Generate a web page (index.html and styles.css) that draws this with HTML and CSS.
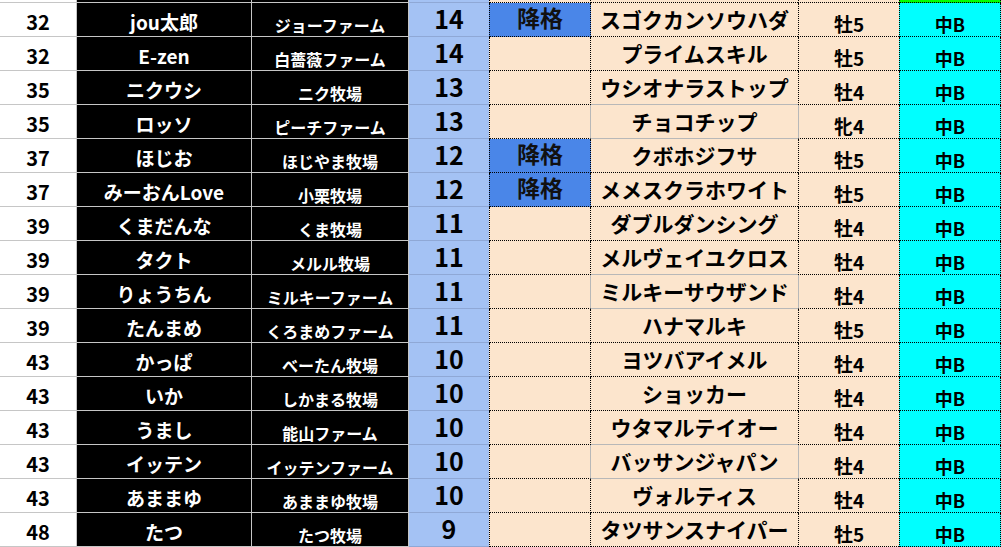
FILE: index.html
```html
<!DOCTYPE html>
<html lang="ja">
<head>
<meta charset="utf-8">
<link rel="stylesheet" href="styles.css">
</head>
<body>
<div class="sheet">
  <div class="c rank strip"></div><div class="c name strip"></div><div class="c farm strip"></div><div class="c num strip"></div><div class="c dem strip"></div><div class="c horse strip"></div><div class="c sex strip"></div><div class="c grade strip green"></div>

  <div class="c rank">32</div><div class="c name">jou太郎</div><div class="c farm">ジョーファーム</div><div class="c num">14</div><div class="c dem down">降格</div><div class="c horse">スゴクカンソウハダ</div><div class="c sex">牡5</div><div class="c grade">中B</div>
  <div class="c rank">32</div><div class="c name">E-zen</div><div class="c farm">白薔薇ファーム</div><div class="c num">14</div><div class="c dem"></div><div class="c horse">プライムスキル</div><div class="c sex">牡5</div><div class="c grade">中B</div>
  <div class="c rank">35</div><div class="c name">ニクウシ</div><div class="c farm">ニク牧場</div><div class="c num">13</div><div class="c dem"></div><div class="c horse above-box">ウシオナラストップ</div><div class="c sex">牡4</div><div class="c grade">中B</div>
  <div class="c rank">35</div><div class="c name">ロッソ</div><div class="c farm">ピーチファーム</div><div class="c num">13</div><div class="c dem left-box"></div><div class="c horse box">チョコチップ</div><div class="c sex">牝4</div><div class="c grade">中B</div>
  <div class="c rank">37</div><div class="c name">ほじお</div><div class="c farm">ほじやま牧場</div><div class="c num">12</div><div class="c dem down">降格</div><div class="c horse">クボホジフサ</div><div class="c sex">牡5</div><div class="c grade">中B</div>
  <div class="c rank">37</div><div class="c name">みーおんLove</div><div class="c farm">小栗牧場</div><div class="c num">12</div><div class="c dem down">降格</div><div class="c horse">メメスクラホワイト</div><div class="c sex">牡5</div><div class="c grade">中B</div>
  <div class="c rank">39</div><div class="c name">くまだんな</div><div class="c farm">くま牧場</div><div class="c num">11</div><div class="c dem"></div><div class="c horse">ダブルダンシング</div><div class="c sex">牡4</div><div class="c grade">中B</div>
  <div class="c rank">39</div><div class="c name">タクト</div><div class="c farm">メルル牧場</div><div class="c num">11</div><div class="c dem"></div><div class="c horse above-box">メルヴェイユクロス</div><div class="c sex">牡4</div><div class="c grade">中B</div>
  <div class="c rank">39</div><div class="c name">りょうちん</div><div class="c farm">ミルキーファーム</div><div class="c num">11</div><div class="c dem left-box"></div><div class="c horse box">ミルキーサウザンド</div><div class="c sex">牡4</div><div class="c grade">中B</div>
  <div class="c rank">39</div><div class="c name">たんまめ</div><div class="c farm">くろまめファーム</div><div class="c num">11</div><div class="c dem"></div><div class="c horse">ハナマルキ</div><div class="c sex">牡5</div><div class="c grade">中B</div>
  <div class="c rank">43</div><div class="c name">かっぱ</div><div class="c farm">べーたん牧場</div><div class="c num">10</div><div class="c dem"></div><div class="c horse">ヨツバアイメル</div><div class="c sex">牡4</div><div class="c grade">中B</div>
  <div class="c rank">43</div><div class="c name">いか</div><div class="c farm">しかまる牧場</div><div class="c num">10</div><div class="c dem"></div><div class="c horse">ショッカー</div><div class="c sex">牡4</div><div class="c grade">中B</div>
  <div class="c rank">43</div><div class="c name">うまし</div><div class="c farm">能山ファーム</div><div class="c num">10</div><div class="c dem"></div><div class="c horse above-box">ウタマルテイオー</div><div class="c sex">牡4</div><div class="c grade">中B</div>
  <div class="c rank">43</div><div class="c name">イッテン</div><div class="c farm">イッテンファーム</div><div class="c num">10</div><div class="c dem left-box"></div><div class="c horse box">バッサンジャパン</div><div class="c sex">牡4</div><div class="c grade">中B</div>
  <div class="c rank">43</div><div class="c name">あままゆ</div><div class="c farm">あままゆ牧場</div><div class="c num">10</div><div class="c dem"></div><div class="c horse">ヴォルティス</div><div class="c sex">牡4</div><div class="c grade">中B</div>
  <div class="c rank">48</div><div class="c name">たつ</div><div class="c farm">たつ牧場</div><div class="c num">9</div><div class="c dem"></div><div class="c horse">タツサンスナイパー</div><div class="c sex">牡5</div><div class="c grade">中B</div>
</div>
</body>
</html>
```

FILE: styles.css
```css
html, body {
  margin: 0;
  padding: 0;
  background: #ffffff;
  overflow: hidden;
}

.sheet {
  display: grid;
  grid-template-columns: 77px 175px 157px 80px 102px 207px 101px 102px;
  grid-template-rows: 3px repeat(16, 34px);
  width: 1001px;
  font-family: "Noto Sans CJK JP", "Noto Sans", sans-serif;
  font-weight: 700;
  color: #000;
}

.c {
  box-sizing: border-box;
  display: flex;
  align-items: flex-end;
  justify-content: center;
  line-height: 1;
  white-space: nowrap;
}

.strip { padding: 0 !important; }

.rank {
  background: #ffffff;
  border-right: 1px solid #c6c6c6;
  border-bottom: 1px solid #c6c6c6;
  font-size: 20px;
  padding-bottom: 4px;
}

.name {
  background: #000;
  color: #fff;
  border-right: 1px solid #c6c6c6;
  border-bottom: 1px solid #c6c6c6;
  font-size: 19px;
  padding-bottom: 5px;
}

.farm {
  background: #000;
  color: #fff;
  border-right: 1px solid #c6c6c6;
  border-bottom: 1px solid #c6c6c6;
  font-size: 16px;
  padding-bottom: 3px;
}

.num {
  background: #a4c2f4;
  border-bottom: 1px solid #8fa8d6;
  font-size: 25px;
  padding-bottom: 5px;
}

.dem {
  background: #fce5cd;
  border-left: 1px dotted #000;
  border-right: 1px dotted #000;
  border-bottom: 1px dotted #000;
  font-size: 23px;
  padding-bottom: 7px;
  color: #111;
}

.dem.down { background: #4a86e8; }

.horse {
  background: #fce5cd;
  border-bottom: 1px dotted #000;
  font-size: 21px;
  padding-bottom: 6px;
}

.sex {
  background: #fce5cd;
  border-left: 1px dotted #000;
  border-bottom: 1px dotted #000;
  font-size: 19px;
  padding-bottom: 3px;
}

.grade {
  background: #00ffff;
  border-left: 1px dotted #000;
  border-right: 1px dotted #000;
  border-bottom: 1px dotted #000;
  font-size: 18px;
  padding-bottom: 3px;
}

.grade.green { background: #00ff00; }

.horse.above-box { border-bottom: 1px solid #b8b8b8; }
.dem.left-box { border-right: 1px solid #b8b8b8; }
.horse.box {
  border-bottom: 1px solid #b8b8b8;
}
.horse.box + .sex { border-left: 1px solid #b8b8b8; }
```
